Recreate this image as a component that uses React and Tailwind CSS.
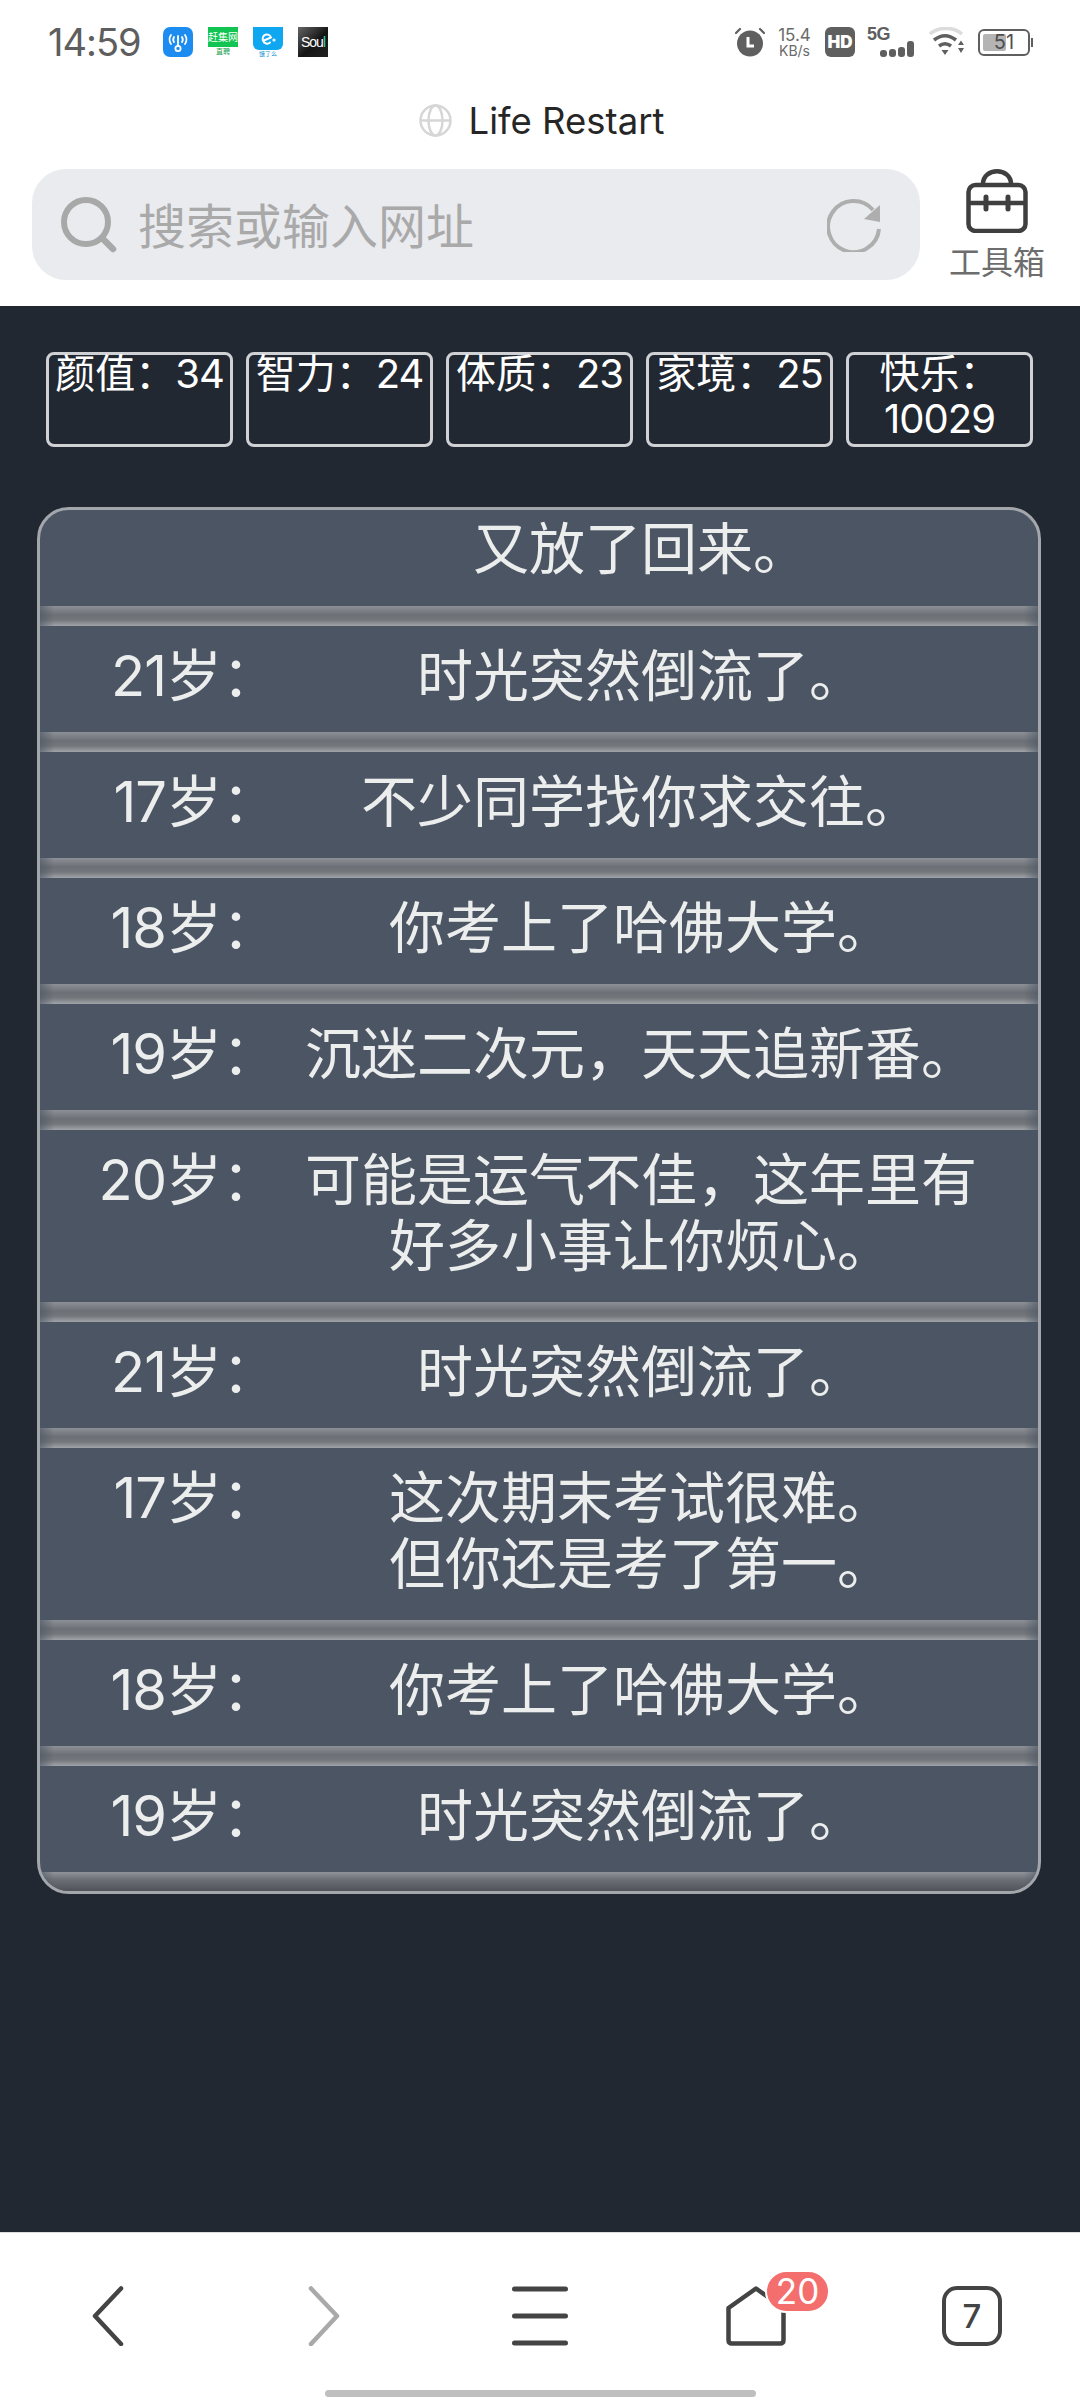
const rows = [
  { age: 21, text: '时光突然倒流了。' },
  { age: 17, text: '不少同学找你求交往。' },
  { age: 18, text: '你考上了哈佛大学。' },
  { age: 19, text: '沉迷二次元，天天追新番。' },
  { age: 20, text: '可能是运气不佳，这年里有好多小事让你烦心。' },
  { age: 21, text: '时光突然倒流了。' },
  { age: 17, text: '这次期末考试很难。\n但你还是考了第一。' },
  { age: 18, text: '你考上了哈佛大学。' },
  { age: 19, text: '时光突然倒流了。' },
];

const stats = [
  { label: '颜值：', value: 34 },
  { label: '智力：', value: 24 },
  { label: '体质：', value: 23 },
  { label: '家境：', value: 25 },
  { label: '快乐：', value: 10029 },
];

const Separator = ({ last }) => (
  <div className={last ? 'relative h-[19px] bg-[linear-gradient(#90939a,#6c6f75_40%,#4f5259)]' : 'relative h-[20px] bg-[linear-gradient(#8d9096,#6c6f75_45%,#74777c_70%,#a1a4a9)]'}>
    <div className="absolute inset-0 bg-[linear-gradient(90deg,#4b556399,transparent_14px,transparent_calc(100%-14px),#4b556399)]" />
  </div>
);

const AppIcons = () => (
  <div className="ml-[22px] flex gap-[15px]">
    <div className="flex h-[30px] w-[30px] items-center justify-center rounded-[7px] bg-[#1d8cf0]">
      <svg width="24" height="24" viewBox="0 0 24 24" fill="none" stroke="#fff" strokeWidth="1.8" strokeLinecap="round">
        <path d="M5 5c-2 3-2 6 0 9M19 5c2 3 2 6 0 9M8 7c-1 2-1 4 0 5M16 7c1 2 1 4 0 5M12 6v10" />
        <circle cx="12" cy="18.5" r="2.6" />
      </svg>
    </div>
    <div className="flex h-[30px] w-[30px] flex-col items-center">
      <div className="flex h-[20px] w-[30px] items-center justify-center overflow-hidden bg-[#12c451] text-[10px] leading-none whitespace-nowrap text-white">赶集网</div>
      <div className="text-[7px] leading-[10px] text-[#12a048]">直聘</div>
    </div>
    <div className="flex h-[30px] w-[30px] flex-col items-center">
      <div className="flex h-[23px] w-[30px] items-center justify-center rounded-b-[6px] bg-[#0fa8f0]">
        <svg width="18" height="18" viewBox="0 0 18 18" fill="none" stroke="#fff" strokeWidth="2" strokeLinecap="round">
          <path d="M5 10.500 12 7.500C11 4.500 7.500 3.500 5 5.500c-2.500 2.500-1.500 7 2 8 1.500.4 3 0 4-1" />
          <circle cx="15" cy="10" r=".6" />
        </svg>
      </div>
      <div className="text-[6px] leading-[7px] text-[#0f8fd0]">饿了么</div>
    </div>
    <div className="flex h-[30px] w-[30px] items-center justify-center bg-[linear-gradient(135deg,#666,#151515_55%,#222)] font-['Liberation_Sans',sans-serif] text-[14px] leading-none tracking-[-1px] text-white">
      Sou<span className="text-[#2bd4c4]">l</span>
    </div>
  </div>
);

const StatusRight = () => (
  <div className="flex items-center">
    <svg width="30" height="30" viewBox="0 0 30 30" fill="#5f5f5f">
      <circle cx="15" cy="16.500" r="13" />
      <path d="M1 6l4-4M29 6l-4-4" stroke="#5f5f5f" strokeWidth="2.200" strokeLinecap="round" />
      <path d="M13 10v9h6" fill="none" stroke="#fff" strokeWidth="3" />
    </svg>
    <div className="ml-[11px] flex w-[37px] flex-col items-center text-[#6a6a6a]">
      <span className="text-[17px] leading-[17px]">15.4</span>
      <span className="text-[14px] leading-[14px]">KB/s</span>
    </div>
    <div className="ml-[12px] flex h-[30px] w-[30px] items-center justify-center rounded-[6px] bg-[#5f5f5f] text-[17px] leading-none font-black text-white">HD</div>
    <div className="relative ml-[12px] h-[30px] w-[47px]">
      <span className="absolute top-[-2px] left-0 font-['Liberation_Sans',sans-serif] text-[18px] leading-[18px] font-bold tracking-[-0.5px] text-[#5f5f5f]">5G</span>
      <svg className="absolute right-0 bottom-0" width="35" height="16" viewBox="0 0 35 16" fill="#5f5f5f">
        <rect x="1" y="9" width="7" height="7" rx="3" />
        <rect x="10" y="8" width="7" height="8" rx="3" />
        <rect x="19" y="6" width="7" height="10" rx="3" />
        <rect x="28" y="0" width="7" height="16" rx="3" />
      </svg>
    </div>
    <svg className="ml-[15px]" width="36" height="30" viewBox="0 0 36 30" fill="none">
      <path d="M1 7C9-.500 25-.500 33 7" stroke="#dcdcdc" strokeWidth="3.500" />
      <path d="M5 13c7-5.500 15-5.500 22 0" stroke="#5f5f5f" strokeWidth="3.500" />
      <path d="M10 19c4-3 8-3 12 0" stroke="#5f5f5f" strokeWidth="3.500" />
      <path d="M12.500 23h7L16 28zM29 18h6l-3-4.500zM29 21h6l-3 5z" fill="#5f5f5f" />
    </svg>
    <div className="ml-[13px] flex items-center">
      <div className="relative flex h-[27px] w-[52px] items-center rounded-[6px] border-2 border-[#5f5f5f] p-[3px]">
        <div className="h-full w-[23px] rounded-[2px] bg-[#b4b4b4]" />
        <span className="absolute inset-0 text-center text-[20px] leading-[23px] text-[#4f4f4f]">51</span>
      </div>
      <div className="ml-[1px] h-[9px] w-[2px] bg-[#5f5f5f]" />
    </div>
  </div>
);

const Header = () => (
  <div className="h-[306px] bg-white">
    <div className="flex h-[84px] items-center justify-between pr-[47px] pl-[48px]">
      <div className="flex items-center">
        <span className="w-[93px] text-[38px] leading-none tracking-[-1px] text-[#5e5e5e]">14:59</span>
        <AppIcons />
      </div>
      <StatusRight />
    </div>
    <div className="flex h-[72px] items-center justify-center gap-[17px] pl-[3px]">
      <svg width="33" height="33" viewBox="0 0 33 33" fill="none" stroke="#d6d6d6" strokeWidth="2.500">
        <circle cx="16.500" cy="16.500" r="15" />
        <ellipse cx="16.500" cy="16.500" rx="7" ry="15" />
        <path d="M2 16.500h29" />
      </svg>
      <span className="mt-[3px] text-[36.500px] leading-none text-[#262626]">Life Restart</span>
    </div>
    <div className="mt-[13px] flex items-start pl-[32px]">
      <div className="flex h-[111px] w-[888px] items-center rounded-[34px] bg-[#e9ebef] pr-[39px] pl-[29px]">
        <svg width="56" height="56" viewBox="0 0 56 56" fill="none" stroke="#a8a8a8" strokeLinecap="round">
          <circle cx="25" cy="25" r="22" strokeWidth="6" />
          <path d="M42 42l10 10" strokeWidth="6.500" />
        </svg>
        <span className="mt-[5px] ml-[21px] flex-1 text-[48px] leading-none text-[#a9a9a9]">搜索或输入网址</span>
        <svg width="54" height="54" viewBox="0 0 54 54" fill="none">
          <path d="M46 12A25.500 25.500 0 1 0 52 31" stroke="#aeaeae" strokeWidth="4" />
          <path d="M53 7v17l-16-3z" fill="#aeaeae" />
        </svg>
      </div>
      <div className="ml-[29px] flex w-[96px] flex-col items-center">
        <svg width="62" height="64" viewBox="0 0 62 64" fill="none" stroke="#3f3f3f" strokeWidth="4.500">
          <rect x="2.500" y="16" width="57" height="46" rx="7" />
          <path d="M17 15C17-2 45-2 45 15" />
          <path d="M2.500 34h57" />
          <path d="M20 28v12M42 28v12" strokeWidth="5" strokeLinecap="round" />
        </svg>
        <span className="mt-[13px] text-[32px] leading-[34px] whitespace-nowrap text-[#6d6d6d]">工具箱</span>
      </div>
    </div>
  </div>
);

const Nav = () => (
  <div className="h-[168px] border-t border-[#dcdcdc] bg-white">
    <div className="flex h-[157px] items-start pt-[53px]">
      <div className="flex w-[216px] justify-center">
        <svg width="32" height="60" viewBox="0 0 32 60" fill="none" stroke="#444" strokeWidth="4.500" strokeLinecap="round" strokeLinejoin="round">
          <path d="M29 2.500 3 30l26 28" />
        </svg>
      </div>
      <div className="flex w-[216px] justify-center">
        <svg width="32" height="60" viewBox="0 0 32 60" fill="none" stroke="#a9a9a9" strokeWidth="4.500" strokeLinecap="round" strokeLinejoin="round">
          <path d="M3 2.500 29 30 3 58" />
        </svg>
      </div>
      <div className="flex w-[216px] justify-center">
        <svg width="56" height="60" viewBox="0 0 56 60" fill="none" stroke="#444" strokeWidth="5" strokeLinecap="round">
          <path d="M2.500 3h51M2.500 30h51M2.500 57h51" />
        </svg>
      </div>
      <div className="flex w-[216px] justify-center">
        <div className="relative h-[60px] w-[60px]">
          <svg width="60" height="60" viewBox="0 0 60 60" fill="none" stroke="#444" strokeWidth="4.500" strokeLinejoin="round">
            <path d="M30 2.500 2.500 22v32c0 2 1 3.500 3.500 3.500h48c2.500 0 3.500-1.500 3.500-3.500V22z" />
          </svg>
          <span className="absolute top-[-16px] left-[39px] h-[43px] w-[65px] rounded-full border-2 border-white bg-[#f56e6e] text-center text-[35px] leading-[39px] text-white">20</span>
        </div>
      </div>
      <div className="flex w-[216px] justify-center">
        <div className="flex h-[60px] w-[60px] items-center justify-center rounded-[15px] border-[4.500px] border-[#444] text-[33px] leading-none font-medium text-[#444]">7</div>
      </div>
    </div>
    <div className="ml-[325px] h-[7px] w-[431px] rounded-full bg-[#bfbfbf]" />
  </div>
);

export default function App() {
  return (
    <div className="flex h-[2400px] w-[1080px] flex-col overflow-hidden bg-[#222831] font-['Inter','Noto_Sans_CJK_SC',sans-serif]">
      <Header />
      <div className="flex-1 pt-[46px]">
        <div className="ml-[46px] grid w-[987px] grid-cols-5 gap-[13px]">
          {stats.map((s) => (
            <div key={s.label} className="h-[95px] rounded-[8px] border-[3px] border-[#cfd1d4] text-center text-[40px] leading-[45px] text-white">
              <div className="-mt-[4px]">
                {s.label}
                <span className="tracking-[-1px]">{s.value}</span>
              </div>
            </div>
          ))}
        </div>
        <div className="mt-[60px] ml-[37px] w-[1004px] overflow-hidden rounded-[32px] border-[3px] border-[#a3a6ab] bg-[#4b5563] text-[56px] leading-[66px] text-[#eceded]">
          <div className="h-[96px] pt-[6px] pl-[251px]">
            <div className="w-[700px] text-center">又放了回来。</div>
          </div>
          <Separator />
          {rows.map((r, i) => (
            <div key={i}>
              <div className="flex pt-[17px] pb-[23px]">
                <div className="w-[238px] text-right">
                  <span className="tracking-[-1px]">{r.age}</span>岁：
                </div>
                <div className="ml-[13px] w-[700px] text-center whitespace-pre-line">{r.text}</div>
              </div>
              <Separator last={i === rows.length - 1} />
            </div>
          ))}
        </div>
      </div>
      <Nav />
    </div>
  );
}
